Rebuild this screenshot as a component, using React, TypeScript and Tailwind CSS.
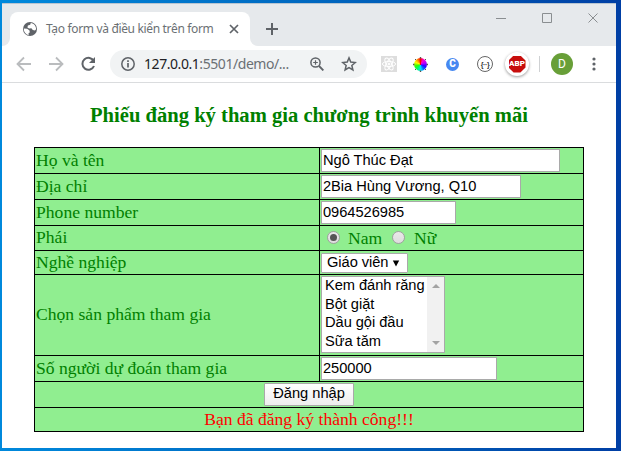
import type { ReactNode } from 'react';

const UI = "font-['Noto_Sans','Open_Sans',sans-serif]";
const SANS = "font-['Liberation_Sans',sans-serif] text-[14.67px] text-black";

function Row({ label, height, children }: { label: string; height: string; children: ReactNode }) {
  return (
    <div className={`grid grid-cols-[285px_264px] border-b border-black ${height}`}>
      <div className="flex items-center whitespace-nowrap border-r border-black pb-0.5 pl-px">{label}</div>
      <div className="flex items-start pl-px pt-px">{children}</div>
    </div>
  );
}

function Field({ value, width }: { value: string; width: string }) {
  return (
    <input
      defaultValue={value}
      className={`h-[23px] border border-[#a9a9a9] bg-white px-px pb-0.5 tracking-[-0.03px] outline-none ${SANS} ${width}`}
    />
  );
}

function Radio({ checked = false }: { checked?: boolean }) {
  return (
    <span className="mb-0.5 flex size-[13px] items-center justify-center rounded-full border border-[#a0a0a0] bg-linear-to-b from-[#e9e9e9] to-[#dddddd]">
      {checked && <span className="size-[7px] rounded-full bg-[#555]" />}
    </span>
  );
}

function TabStrip() {
  return (
    <div className="flex h-[43px] border-t border-[#b8c5d1] bg-[#e6e9ec]">
      <div className="w-2 self-end overflow-hidden bg-white">
        <div className="h-2 rounded-br-lg bg-[#e6e9ec]" />
      </div>
      <div className="mt-2 flex h-[34px] w-[240px] items-center rounded-t-lg bg-white pl-3">
        <svg width="16" height="16" viewBox="0 0 16 16" className="shrink-0">
          <circle cx="8" cy="8" r="7" fill="#5f6368" />
          <path d="M1.800 7.600l3.400.2 2.300 1.700.3 2-1.200.6v2.200C3.600 13.600 1.700 11 1.800 7.600zM8.800 2l-.6 1.800-2.300.8-.5 1.800 1.700 1 2.300-.2 1.400 1.700 2.200.6 1.100-1.200C14.200 5 12 2.400 8.800 2z" fill="#fff" />
        </svg>
        <span className={`ml-2 w-[182px] whitespace-nowrap text-[12px] tracking-[-0.34px] text-[#6b7074] ${UI}`}>
          Tạo form và điều kiển trên form
        </span>
        <svg width="10" height="10" viewBox="0 0 10 10" className="ml-px shrink-0" stroke="#5f6368" strokeWidth="1.7">
          <path d="M1 1l8 8M9 1L1 9" />
        </svg>
      </div>
      <div className="w-2 self-end overflow-hidden bg-white">
        <div className="h-2 rounded-bl-lg bg-[#e6e9ec]" />
      </div>
      <svg width="14" height="14" viewBox="0 0 14 14" className="ml-[7px] mt-[18px]" stroke="#5f6368" strokeWidth="2">
        <path d="M7 1v12M1 7h12" />
      </svg>
      <svg width="103" height="12" viewBox="0 0 103 12" className="ml-auto mr-[17px] mt-[8px]" fill="none" stroke="#8a8e91">
        <path d="M0 6.500h10M46.500 1.500h9v9h-9zM92.500 1.500l9 9M101.500 1.500l-9 9" />
      </svg>
    </div>
  );
}

const wheel =
  'bg-[conic-gradient(#f00,#f0c_30deg,#a0f_75deg,#30f_110deg,#06f_145deg,#0df_175deg,#0f6_215deg,#3f0_255deg,#ff0_295deg,#f90_325deg,#f00)]';

function Toolbar() {
  return (
    <div className="flex h-[37px] items-center border-b border-[#dadcde] bg-white">
      <svg width="94" height="18" viewBox="0 0 94 18" className="ml-[14px] shrink-0" fill="none" strokeWidth="1.8">
        <path d="M15 9H2M8 2.500L1.500 9 8 15.500M33 9h13M40 2.500L46.500 9 40 15.500" stroke="#babcbe" />
        <path d="M77.800 6.100A6 6 0 1 0 78 11" stroke="#5f6368" strokeWidth="2" />
        <path d="M79 2v6h-6z" fill="#5f6368" />
      </svg>
      <div className="flex h-7 w-[257px] shrink-0 items-center rounded-full bg-[#f1f3f4] pl-[11px]">
        <svg width="14" height="14" viewBox="0 0 14 14" className="shrink-0" fill="none" stroke="#5f6368" strokeWidth="1.5">
          <circle cx="7" cy="7" r="6.200" />
          <path d="M7 6v4.500M7 3.300v1.600" strokeWidth="1.700" />
        </svg>
        <span className={`ml-[9px] w-[166px] whitespace-nowrap pb-px text-[14px] tracking-[-0.44px] text-[#6b7074] ${UI}`}>
          <span className="text-[#202124]">127.0.0.1</span>:5501/demo/...
        </span>
        <svg width="14" height="14" viewBox="0 0 14 14" className="shrink-0" fill="none" stroke="#5f6368" strokeWidth="1.500">
          <circle cx="5.500" cy="5.500" r="4.600" />
          <path d="M9 9l4.400 4.400" strokeWidth="1.900" />
          <path d="M5.500 3.200v4.600M3.200 5.500h4.600" strokeWidth="1.200" />
        </svg>
        <svg width="16" height="16" viewBox="0 0 16 16" className="ml-[17px] shrink-0" fill="none" stroke="#5f6368" strokeWidth="1.500">
          <path d="M8 1.900l1.750 4.200 4.550.4-3.450 3 1.050 4.500L8 11.600 4.100 14l1.050-4.500-3.450-3 4.550-.4z" />
        </svg>
      </div>
      <svg width="16" height="16" viewBox="0 0 16 16" className="ml-[14px] shrink-0" fill="none" stroke="#fff" strokeWidth="1">
        <rect width="16" height="16" fill="#dddddd" stroke="none" />
        <ellipse cx="8" cy="8" rx="6.600" ry="2.600" />
        <ellipse cx="8" cy="8" rx="6.600" ry="2.600" transform="rotate(60 8 8)" />
        <ellipse cx="8" cy="8" rx="6.600" ry="2.600" transform="rotate(120 8 8)" />
        <circle cx="8" cy="8" r="1" fill="#fff" />
      </svg>
      <div className={`relative ml-[17px] size-[13px] shrink-0 rounded-full ${wheel}`}>
        <svg width="15" height="15" viewBox="0 0 15 15" className="absolute -left-px -top-px" fill="#555">
          <path d="M6.800 0h1.400v1.400H6.800zM6.800 13.600h1.400V15H6.800zM0 6.800h1.400v1.400H0zM13.600 6.800H15v1.400h-1.400zM2 2h1v1H2zM12 2h1v1h-1zM2 12h1v1H2zM12 12h1v1h-1z" />
        </svg>
      </div>
      <div className="ml-[19px] flex size-[13px] shrink-0 items-center justify-center rounded-full bg-[#4688f1] font-['Roboto',sans-serif] text-[10px] font-black leading-none text-white">
        C
      </div>
      <div className="ml-[18px] flex size-4 shrink-0 items-center justify-center rounded-full border-[1.5px] border-[#666] font-['Liberation_Sans',sans-serif] text-[7px] font-bold leading-none tracking-[-0.4px] text-[#333]">
        {'{··}'}
      </div>
      <div className="ml-[12px] flex size-6 shrink-0 items-center justify-center rounded-full bg-white shadow-[0_1px_3px_rgba(0,0,0,0.4)]">
        <div className="flex size-[17px] items-center justify-center bg-[#c70d0c] font-['Roboto',sans-serif] text-[8px] font-black leading-none text-white [clip-path:polygon(30%_0,70%_0,100%_30%,100%_70%,70%_100%,30%_100%,0_70%,0_30%)]">
          ABP
        </div>
      </div>
      <div className="ml-[10px] h-4 w-px shrink-0 bg-[#cfd1d3]" />
      <div className="ml-[11px] flex size-[22px] shrink-0 items-center justify-center rounded-full bg-[#689f38] font-['Roboto',sans-serif] text-[12px] text-white">
        D
      </div>
      <svg width="4" height="14" viewBox="0 0 4 14" className="ml-[19px] shrink-0" fill="#5f6368">
        <circle cx="2" cy="2" r="1.600" />
        <circle cx="2" cy="7" r="1.600" />
        <circle cx="2" cy="12" r="1.600" />
      </svg>
    </div>
  );
}

export default function App() {
  return (
    <div className="h-[451px] w-[621px] overflow-hidden bg-linear-to-r from-[#0089dc] via-[#0068c0] to-[#003fa5] pl-0.5 pt-[3px]">
      <div className="h-[445px] w-[614px] bg-white">
        <TabStrip />
        <Toolbar />
        <div className="pl-8 font-['Liberation_Serif',serif] text-[17.6px] leading-5 text-[#008000]">
          <h3 className="h-[64px] w-[550px] whitespace-nowrap pt-[20px] text-center text-[20.6px] font-bold leading-6">
            Phiếu đăng ký tham gia chương trình khuyến mãi
          </h3>
          <div className="w-[550px] border-x border-t border-black bg-[#90ee90]">
            <Row label="Họ và tên" height="h-[26px]">
              <Field value="Ngô Thúc Đạt" width="w-[239px]" />
            </Row>
            <Row label="Địa chỉ" height="h-[26px]">
              <Field value="2Bia Hùng Vương, Q10" width="w-[200px]" />
            </Row>
            <Row label="Phone number" height="h-[26px]">
              <Field value="0964526985" width="w-[135px]" />
            </Row>
            <Row label="Phái" height="h-[25px]">
              <div className="flex h-[22px] items-center pl-1.5">
                <Radio checked />
                <span className="ml-2 w-[44px]">Nam</span>
                <Radio />
                <span className="ml-[9px]">Nữ</span>
              </div>
            </Row>
            <Row label="Nghề nghiệp" height="h-[24px]">
              <div className={`mt-px flex h-5 w-[87px] items-center whitespace-nowrap rounded-[1px] border border-[#a9a9a9] bg-white pl-[5px] ${SANS}`}>
                <span className="pb-0.5 tracking-[-0.05px]">Giáo viên</span>
                <svg width="8" height="7" viewBox="0 0 8 7" className="ml-1">
                  <path d="M.8.500h6.400L4 6.500z" />
                </svg>
              </div>
            </Row>
            <Row label="Chọn sản phẩm tham gia" height="h-[81px]">
              <div className={`flex h-[77px] w-[124px] border border-[#a9a9a9] bg-white ${SANS}`}>
                <div className="-mt-px w-[105px] whitespace-nowrap pl-[3px] leading-[18.7px] tracking-[-0.05px]">
                  <div>Kem đánh răng</div>
                  <div>Bột giặt</div>
                  <div>Dầu gội đầu</div>
                  <div>Sữa tăm</div>
                </div>
                <div className="flex w-[17px] flex-col items-center justify-between bg-[#f1f1f1] py-[7px]">
                  <svg width="8" height="4" viewBox="0 0 8 4" fill="#a3a3a3"><path d="M0 4l4-4 4 4z" /></svg>
                  <svg width="8" height="4" viewBox="0 0 8 4" fill="#a3a3a3"><path d="M0 0h8L4 4z" /></svg>
                </div>
              </div>
            </Row>
            <Row label="Số người dự đoán tham gia" height="h-[26px]">
              <Field value="250000" width="w-[176px]" />
            </Row>
            <div className="flex h-[26px] justify-center border-b border-black pt-px">
              <button className={`h-[23px] w-[90px] whitespace-nowrap rounded-[1px] border border-[#a9a9a9] bg-linear-to-b from-white to-[#eeeeee] pb-0.5 leading-[19px] ${SANS}`}>
                Đăng nhập
              </button>
            </div>
            <div className="flex h-[24px] items-center justify-center border-b border-black pb-0.5 text-[#ff0000]">
              Bạn đã đăng ký thành công!!!
            </div>
          </div>
        </div>
      </div>
    </div>
  );
}
